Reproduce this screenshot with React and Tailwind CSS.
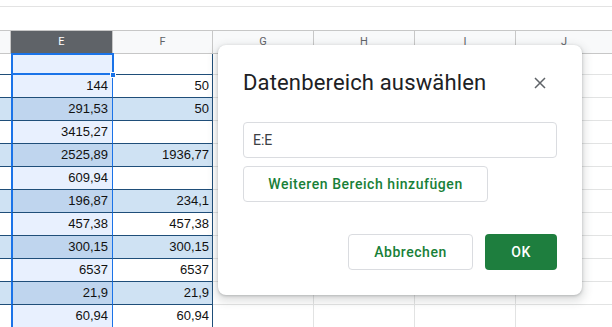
import React from "react";

const rows = [
  ["", "", false, 21],
  ["144", "50", false, 23],
  ["291,53", "50", true, 23],
  ["3415,27", "", false, 23],
  ["2525,89", "1936,77", true, 23],
  ["609,94", "", false, 23],
  ["196,87", "234,1", true, 23],
  ["457,38", "457,38", false, 23],
  ["300,15", "300,15", true, 23],
  ["6537", "6537", false, 23],
  ["21,9", "21,9", true, 23],
  ["60,94", "60,94", false, 23],
];

function Row({ e, f, band, h, first }) {
  return (
    <div className="flex" style={{ height: h }}>
      <div className={`w-[11px] shrink-0 border-b border-[#1f4e79] ${band ? "bg-[#cfe2f3]" : "bg-white"}`} />
      <div
        className={`relative w-[102px] shrink-0 border-b border-l-2 border-r border-l-[#1a73e8] border-r-[#1a73e8] border-b-[#1f4e79] pr-[4px] text-right leading-[22px] ${band ? "bg-[#bfd5ee]" : "bg-[#e8f0fe]"}`}
      >
        {e}
        {first && (
          <div className="absolute inset-x-[-2px] top-[-1px] bottom-[-1px] border-2 border-[#1a73e8]" />
        )}
        {first && (
          <div className="absolute right-[-4px] bottom-[-4px] h-[6px] w-[6px] bg-[#1a73e8] border border-white z-10" />
        )}
      </div>
      <div
        className={`w-[100px] shrink-0 border-b border-r border-[#1f4e79] pr-[3px] text-right leading-[22px] ${band ? "bg-[#cfe2f3]" : "bg-white"}`}
      >
        {f}
      </div>
      <div className="w-[101px] shrink-0 border-b border-r border-[#e2e3e3]" />
      <div className="w-[101px] shrink-0 border-b border-r border-[#e2e3e3]" />
      <div className="w-[101px] shrink-0 border-b border-r border-[#e2e3e3]" />
      <div className="flex-1 border-b border-[#e2e3e3]" />
    </div>
  );
}

export default function App() {
  return (
    <div className="relative h-[327px] w-[612px] overflow-hidden bg-white font-['Liberation_Sans',Arial,sans-serif] text-[13px] text-[#111]">
      <div className="h-[7px] border-b border-[#e3e3e3]" />
      <div className="h-[23px]" />
      <div className="flex h-[24px] border-y border-[#c7c7c7] bg-[#f8f9fa] text-[11px] text-[#5f6368] font-['Roboto',sans-serif] leading-[22px]">
        <div className="w-[11px] shrink-0 border-r border-[#c7c7c7]" />
        <div className="w-[101px] shrink-0 bg-[#5f6368] text-center text-white">E</div>
        <div className="w-[101px] shrink-0 border-l border-r border-[#c7c7c7] text-center">F</div>
        <div className="w-[101px] shrink-0 border-r border-[#c7c7c7] text-center">G</div>
        <div className="w-[101px] shrink-0 border-r border-[#c7c7c7] text-center">H</div>
        <div className="w-[101px] shrink-0 border-r border-[#c7c7c7] text-center">I</div>
        <div className="flex-1 text-center">J</div>
      </div>
      {rows.map((r, i) => (
        <Row key={i} e={r[0]} f={r[1]} band={r[2]} h={r[3]} first={i === 0} />
      ))}

      <div className="absolute left-[218px] top-[45px] flex h-[250px] w-[364px] flex-col rounded-[8px] bg-white px-[25px] pt-[24px] shadow-[0_1px_3px_rgba(60,64,67,0.3),0_4px_8px_3px_rgba(60,64,67,0.15)] font-['Roboto',sans-serif] z-20">
        <div className="flex h-[28px] items-center justify-between">
          <div className="text-[22px] leading-[28px] tracking-[0.15px] text-[#202124]">Datenbereich auswählen</div>
          <svg width="12" height="12" viewBox="0 0 12 12" className="mr-[11px]">
            <path d="M1 1 L11 11 M11 1 L1 11" stroke="#5f6368" strokeWidth="1.5" />
          </svg>
        </div>
        <div className="mt-[25px] flex h-[36px] items-center rounded-[4px] border border-[#dadce0] pl-[9px] text-[14px] text-[#3c4043]">
          E:E
        </div>
        <div className="mt-[8px] flex h-[36px] w-[245px] items-center justify-center rounded-[4px] border border-[#dadce0] text-[14px] font-medium tracking-[0.55px] text-[#188038]">
          Weiteren Bereich hinzufügen
        </div>
        <div className="mt-[32px] flex justify-end gap-[12px]">
          <div className="flex h-[36px] w-[125px] items-center justify-center rounded-[4px] border border-[#dadce0] text-[14px] font-medium tracking-[0.55px] text-[#188038]">
            Abbrechen
          </div>
          <div className="flex h-[36px] w-[72px] items-center justify-center rounded-[4px] bg-[#1e7e3e] text-[14px] font-medium tracking-[0.55px] text-white">
            OK
          </div>
        </div>
      </div>
    </div>
  );
}
